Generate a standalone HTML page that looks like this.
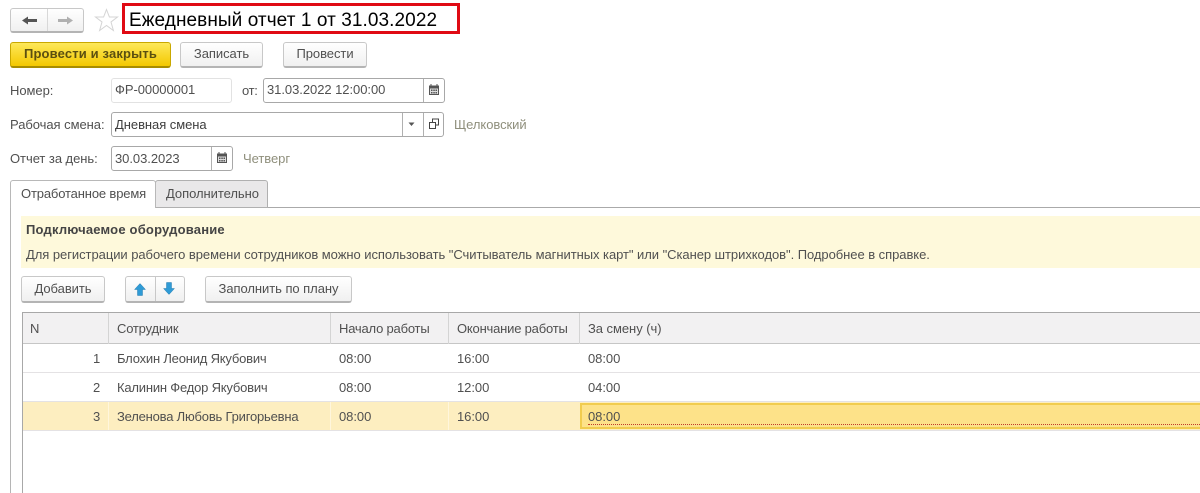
<!DOCTYPE html>
<html><head><meta charset="utf-8"><style>
html,body{margin:0;padding:0;background:#fff}
#p{position:relative;width:1200px;height:493px;overflow:hidden;background:#fff;font-family:"Liberation Sans",sans-serif;font-size:13px;letter-spacing:-.05px;color:#505050}
#p div{position:absolute;box-sizing:border-box}
.t{white-space:nowrap;line-height:14px;height:14px}
.b{background:linear-gradient(#fff,#f0f0f0);border:1px solid #c8c8c8;border-bottom:2px solid #b4b4b4;border-radius:3px;text-align:center;line-height:23px;color:#505050;white-space:nowrap}
.f{background:#fff;border:1px solid #a8a8a8;border-radius:3px}
.g{color:#8f8f7c}
.v{background:#b0b0b0;width:1px}
.h{background:#e4e2e4;height:1px;left:23px;width:1177px}
.c{width:1px}
.th{letter-spacing:-.2px}
</style></head><body><div id="p">

<div class="b" style="left:10px;top:8px;width:74px;height:25px"></div>
<div style="left:47px;top:9px;width:1px;height:22px;background:#d8d8d8"></div>
<svg style="position:absolute;left:22px;top:16px" width="15" height="9" viewBox="0 0 15 9"><path d="M0 4.500L6 0.500V3H15V6H6V8.500Z" fill="#555"/></svg>
<svg style="position:absolute;left:58px;top:16px" width="15" height="9" viewBox="0 0 15 9"><path d="M15 4.500L9 0.500V3H0V6H9V8.500Z" fill="#b0b0b0"/></svg>
<svg style="position:absolute;left:94px;top:8px" width="25" height="24" viewBox="0 0 25 24"><path d="M12.500 1.500L15.400 9H23.500L17 14L19.400 22.500L12.500 17.500L5.600 22.500L8 14L1.500 9H9.600Z" fill="#fff" stroke="#d4d4d4" stroke-width="1"/></svg>

<div style="left:122px;top:3px;width:338px;height:31px;border:3px solid #e00a14"></div>
<div class="t" style="left:129px;top:10px;height:21px;line-height:21px;font-size:19px;color:#000;letter-spacing:.08px">Ежедневный отчет 1 от 31.03.2022</div>

<div class="b" style="left:10px;top:42px;width:161px;height:26px;background:linear-gradient(#fde85a,#f4c800);border-color:#c9a800;border-bottom-color:#a88c00;font-weight:bold;color:#5b4f10;letter-spacing:.15px;line-height:22px">Провести и закрыть</div>
<div class="b" style="left:180px;top:42px;width:83px;height:26px;line-height:22px">Записать</div>
<div class="b" style="left:283px;top:42px;width:84px;height:26px;line-height:22px">Провести</div>

<div class="t" style="left:10px;top:84px">Номер:</div>
<div class="f" style="left:111px;top:78px;width:121px;height:25px;border-color:#e2e2e2"></div>
<div class="t" style="left:115px;top:83px">ФР-00000001</div>
<div class="t" style="left:242px;top:84px;letter-spacing:-.3px">от:</div>
<div class="f" style="left:263px;top:78px;width:182px;height:25px"></div>
<div class="t" style="left:267px;top:83px">31.03.2022 12:00:00</div>
<div class="v" style="left:423px;top:79px;height:23px"></div>
<svg style="position:absolute;left:429px;top:84px" width="10" height="11" viewBox="0 0 10 11"><path d="M0 1.500H10V11H0Z" fill="#555"/><path d="M2 0V3M8 0V3" stroke="#555"/><path d="M1 4.500H9V10H1Z" fill="#ddd"/><path d="M2 5.500H3.500V7H2ZM4.300 5.500H5.800V7H4.300ZM6.500 5.500H8V7H6.500ZM2 8H3.500V9.500H2ZM4.300 8H5.800V9.500H4.300ZM6.500 8H8V9.500H6.500Z" fill="#555"/></svg>

<div class="t" style="left:10px;top:118px">Рабочая смена:</div>
<div class="f" style="left:111px;top:112px;width:333px;height:25px"></div>
<div class="t" style="left:115px;top:118px;color:#3d3d3d">Дневная смена</div>
<div class="v" style="left:402px;top:113px;height:23px"></div>
<div class="v" style="left:423px;top:113px;height:23px"></div>
<svg style="position:absolute;left:408px;top:122px" width="7" height="4" viewBox="0 0 7 4"><path d="M0.500 0.500H6.500L3.500 4Z" fill="#555"/></svg>
<svg style="position:absolute;left:428px;top:118px" width="12" height="12" viewBox="0 0 12 12"><path d="M4.500 4V1H10.500V7H7.500M1.500 4.500H7.500V10.500H1.500Z" fill="none" stroke="#444"/></svg>
<div class="t g" style="left:454px;top:118px">Щелковский</div>

<div class="t" style="left:10px;top:152px">Отчет за день:</div>
<div class="f" style="left:111px;top:146px;width:122px;height:25px"></div>
<div class="t" style="left:115px;top:152px">30.03.2023</div>
<div class="v" style="left:211px;top:147px;height:23px"></div>
<svg style="position:absolute;left:217px;top:152px" width="10" height="11" viewBox="0 0 10 11"><path d="M0 1.500H10V11H0Z" fill="#555"/><path d="M2 0V3M8 0V3" stroke="#555"/><path d="M1 4.500H9V10H1Z" fill="#ddd"/><path d="M2 5.500H3.500V7H2ZM4.300 5.500H5.800V7H4.300ZM6.500 5.500H8V7H6.500ZM2 8H3.500V9.500H2ZM4.300 8H5.800V9.500H4.300ZM6.500 8H8V9.500H6.500Z" fill="#555"/></svg>
<div class="t g" style="left:243px;top:152px">Четверг</div>

<div style="left:10px;top:207px;width:1190px;height:1px;background:#aaa"></div>
<div style="left:10px;top:207px;width:1px;height:286px;background:#b5b5b5"></div>
<div style="left:155px;top:180px;width:113px;height:28px;background:#e9e8e9;border:1px solid #b0b0b0;border-radius:3px 3px 0 0"></div>
<div style="left:10px;top:180px;width:146px;height:28px;background:#fff;border:1px solid #b8b8b8;border-bottom:0;border-radius:3px 3px 0 0"></div>
<div class="t" style="left:21px;top:187px;letter-spacing:-.15px">Отработанное время</div>
<div class="t" style="left:166px;top:187px">Дополнительно</div>

<div style="left:21px;top:216px;width:1179px;height:52px;background:#fef9db"></div>
<div class="t" style="left:26px;top:223px;font-weight:bold;color:#444;letter-spacing:.2px">Подключаемое оборудование</div>
<div class="t" style="left:26px;top:248px">Для регистрации рабочего времени сотрудников можно использовать "Считыватель магнитных карт" или "Сканер штрихкодов". Подробнее в справке.</div>

<div class="b" style="left:21px;top:276px;width:84px;height:27px">Добавить</div>
<div class="b" style="left:125px;top:276px;width:60px;height:27px"></div>
<div style="left:155px;top:277px;width:1px;height:24px;background:#c8c8c8"></div>
<svg style="position:absolute;left:134px;top:283px" width="12" height="13" viewBox="0 0 12 13"><path d="M6 0.500L11.500 6.500H8.500V12.500H3.500V6.500H0.500Z" fill="#2f9bd6" stroke="#2a7fb0" stroke-width=".5"/></svg>
<svg style="position:absolute;left:163px;top:282px" width="12" height="13" viewBox="0 0 12 13"><path d="M6 12.500L11.500 6.500H8.500V0.500H3.500V6.500H0.500Z" fill="#2f9bd6" stroke="#2a7fb0" stroke-width=".5"/></svg>
<div class="b" style="left:205px;top:276px;width:147px;height:27px">Заполнить по плану</div>

<div style="left:22px;top:312px;width:1178px;height:1px;background:#a8a8a8"></div>
<div style="left:22px;top:312px;width:1px;height:181px;background:#a8a8a8"></div>
<div style="left:23px;top:313px;width:1177px;height:30px;background:#f2f1f2"></div>
<div style="left:23px;top:343px;width:1177px;height:1px;background:#c6c6c6"></div>
<div style="left:108px;top:313px;width:1px;height:31px;background:#d4d4d4"></div>
<div style="left:330px;top:313px;width:1px;height:31px;background:#d4d4d4"></div>
<div style="left:448px;top:313px;width:1px;height:31px;background:#d4d4d4"></div>
<div style="left:579px;top:313px;width:1px;height:31px;background:#d4d4d4"></div>
<div class="t" style="left:30px;top:322px">N</div>
<div class="t th" style="left:117px;top:322px">Сотрудник</div>
<div class="t th" style="left:339px;top:322px">Начало работы</div>
<div class="t th" style="left:457px;top:322px">Окончание работы</div>
<div class="t" style="left:588px;top:322px">За смену (ч)</div>

<div class="h" style="top:372px"></div>
<div class="h" style="top:401px"></div>
<div style="left:23px;top:402px;width:1177px;height:28px;background:#fdeec0"></div>
<div class="c" style="left:108px;top:402px;height:28px;background:#fff6dc"></div>
<div class="c" style="left:330px;top:402px;height:28px;background:#fff6dc"></div>
<div class="c" style="left:448px;top:402px;height:28px;background:#fff6dc"></div>
<div class="h" style="top:430px"></div>
<div style="left:580px;top:403px;width:620px;height:26px;background:#fde289;border:2px solid #f1cc4e;border-right:0"></div>
<div style="left:588px;top:424px;width:612px;height:0;border-top:1px dotted #c0392b"></div>

<div class="t" style="left:93px;top:352px">1</div>
<div class="t th" style="left:117px;top:352px">Блохин Леонид Якубович</div>
<div class="t" style="left:339px;top:352px">08:00</div>
<div class="t" style="left:457px;top:352px">16:00</div>
<div class="t" style="left:588px;top:352px">08:00</div>

<div class="t" style="left:93px;top:381px">2</div>
<div class="t th" style="left:117px;top:381px">Калинин Федор Якубович</div>
<div class="t" style="left:339px;top:381px">08:00</div>
<div class="t" style="left:457px;top:381px">12:00</div>
<div class="t" style="left:588px;top:381px">04:00</div>

<div class="t" style="left:93px;top:410px">3</div>
<div class="t th" style="left:117px;top:410px">Зеленова Любовь Григорьевна</div>
<div class="t" style="left:339px;top:410px">08:00</div>
<div class="t" style="left:457px;top:410px">16:00</div>
<div class="t" style="left:588px;top:410px">08:00</div>

</div></body></html>
